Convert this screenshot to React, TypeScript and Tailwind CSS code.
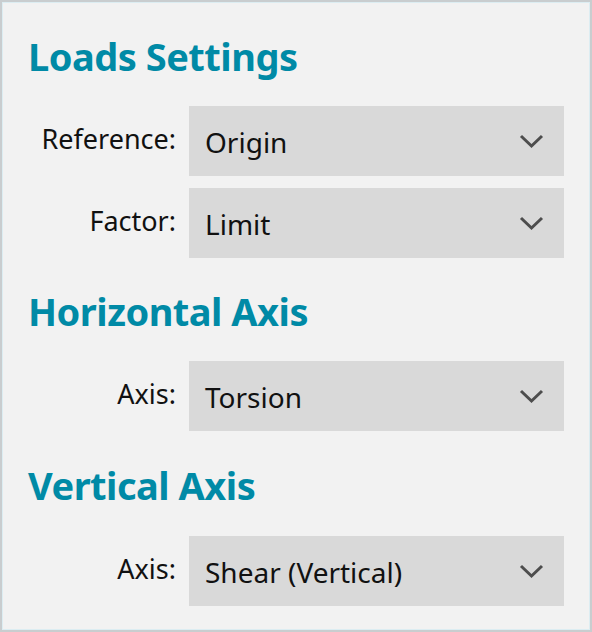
const font = { fontFamily: '"Noto Sans", "Open Sans", sans-serif' }

function Heading({ children, className = "" }: { children: string; className?: string }) {
  return (
    <h2 className={`text-[38px] leading-[40px] font-bold text-[#008aa6] tracking-[-0.5px] ${className}`}>
      {children}
    </h2>
  )
}

// dropdown arrow, thin open chevron
function Chevron() {
  return (
    <svg width="25" height="16" viewBox="0 0 25 16" className="text-[#4d4d4d]">
      <polyline points="2,3 12.5,13 23,3" fill="none" stroke="currentColor" strokeWidth="3" />
    </svg>
  )
}

function Row({ label, value, className = "" }: { label: string; value: string; className?: string }) {
  return (
    <div className={`flex items-center ${className}`}>
      <div className="w-[148px] shrink-0 text-right text-[27px] text-[#111] pb-[4px]">{label}</div>
      <div className="ml-[13px] w-[375px] h-[70px] bg-[#d9d9d9] flex items-center justify-between pl-[16px] pr-[20px]">
        <span className="text-[28px] text-[#111] pt-[2px]">{value}</span>
        <Chevron />
      </div>
    </div>
  )
}

export default function App() {
  return (
    <div style={font} className="w-[592px] h-[632px] border-2 border-[#c9cdcf] bg-[#f2f2f2]">
      <div className="h-full border border-[#dcedf2] px-[25px] pt-[33px]">
        <Heading>Loads Settings</Heading>
        <Row label="Reference:" value="Origin" className="mt-[30px]" />
        <Row label="Factor:" value="Limit" className="mt-[12px]" />
        <Heading className="mt-[33px]">Horizontal Axis</Heading>
        <Row label="Axis:" value="Torsion" className="mt-[30px]" />
        <Heading className="mt-[34px]">Vertical Axis</Heading>
        <Row label="Axis:" value="Shear (Vertical)" className="mt-[31px]" />
      </div>
    </div>
  )
}
